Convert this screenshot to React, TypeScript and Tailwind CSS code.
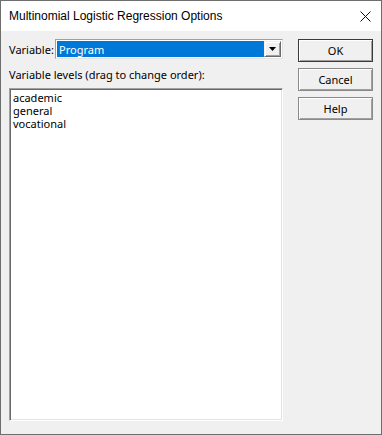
const ui = { fontFamily: '"Noto Sans", "Liberation Sans", sans-serif' };

function DlgButton({ label, isDefault }: { label: string; isDefault?: boolean }) {
  return (
    <button
      className={`h-[23px] w-[75px] bg-[#f0f0f0] text-[11px] text-black border ${
        isDefault ? 'border-[#3a3a3a]' : 'border-[#8a8a8a]'
      } shadow-[inset_1px_1px_0_#ffffff,inset_-1px_-1px_0_#a0a0a0]`}
      style={ui}
    >
      {label}
    </button>
  );
}

export default function App() {
  const levels = ['academic', 'general', 'vocational'];

  return (
    <div
      className="flex h-[435px] w-[382px] flex-col border border-[#6e6e6e] bg-[#f0f0f0] text-[11px] leading-[13px] text-black"
      style={ui}
    >
      {/* title bar */}
      <div className="flex h-[30px] items-center justify-between bg-white pl-[8px] pr-[10px]">
        <span className="text-[12px] text-black" style={{ fontFamily: '"Liberation Sans", sans-serif' }}>
          Multinomial Logistic Regression Options
        </span>
        <svg width="11" height="11" viewBox="0 0 11 11">
          <path d="M0.5 0.5 L10.5 10.5 M10.5 0.5 L0.5 10.5" stroke="#111" strokeWidth="1" />
        </svg>
      </div>

      <div className="flex flex-1 gap-[15px] pl-[8px] pr-[8px] pt-[8px] pb-[13px]">
        {/* left column */}
        <div className="flex w-[274px] flex-col">
          <div className="flex h-[20px] items-center">
            <span className="w-[46px]">Variable:</span>
            <div className="flex h-[20px] flex-1 border border-t-[#a0a0a0] border-l-[#a0a0a0] border-r-[#e3e3e3] border-b-[#e3e3e3] bg-white p-[1px]">
              <div className="flex flex-1 items-center bg-[#0078d7] pl-[2px] text-white">Program</div>
              <div className="flex w-[17px] items-center justify-center border border-t-[#f0f0f0] border-l-[#f0f0f0] border-r-[#696969] border-b-[#696969] bg-[#f0f0f0] shadow-[inset_1px_1px_0_#ffffff,inset_-1px_-1px_0_#a0a0a0]">
                <svg width="7" height="4" viewBox="0 0 7 4">
                  <path d="M0 0 H7 L3.5 4 Z" fill="#000" />
                </svg>
              </div>
            </div>
          </div>

          <div className="mt-[9px]">Variable levels (drag to change order):</div>

          <div className="mt-[7px] flex-1 border border-t-[#a0a0a0] border-l-[#a0a0a0] border-r-[#ffffff] border-b-[#ffffff] bg-white px-[3px] pt-[2px] shadow-[inset_1px_1px_0_#696969,inset_-1px_-1px_0_#e3e3e3]">
            {levels.map((lv) => (
              <div key={lv} className="h-[13px]">
                {lv}
              </div>
            ))}
          </div>
        </div>

        {/* buttons */}
        <div className="flex flex-col gap-[6px]">
          <DlgButton label="OK" isDefault />
          <DlgButton label="Cancel" />
          <DlgButton label="Help" />
        </div>
      </div>
    </div>
  );
}
